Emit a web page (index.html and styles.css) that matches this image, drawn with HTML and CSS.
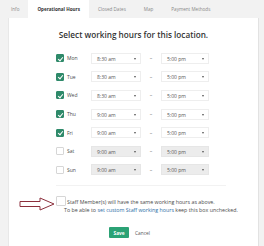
FILE: index.html
```html
<!DOCTYPE html>
<html lang="en">
<head>
  <meta charset="UTF-8">
  <title>Operational Hours</title>
  <link rel="stylesheet" href="styles.css">
</head>
<body>
  <div class="tabs">
    <div class="tab">Info</div>
    <div class="tab active">Operational Hours</div>
    <div class="tab">Closed Dates</div>
    <div class="tab">Map</div>
    <div class="tab">Payment Methods</div>
  </div>

  <div class="panel">
    <h2 class="title">Select working hours for this location.</h2>

    <div class="hours">
      <div class="row">
        <span class="check on"></span><span class="day">Mon</span>
        <div class="select">8:30 am<span class="caret"></span></div>
        <span class="dash">–</span>
        <div class="select to">5:00 pm<span class="caret"></span></div>
      </div>
      <div class="row">
        <span class="check on"></span><span class="day">Tue</span>
        <div class="select">8:30 am<span class="caret"></span></div>
        <span class="dash">–</span>
        <div class="select to">5:00 pm<span class="caret"></span></div>
      </div>
      <div class="row">
        <span class="check on"></span><span class="day">Wed</span>
        <div class="select">8:30 am<span class="caret"></span></div>
        <span class="dash">–</span>
        <div class="select to">5:00 pm<span class="caret"></span></div>
      </div>
      <div class="row">
        <span class="check on"></span><span class="day">Thu</span>
        <div class="select">9:00 am<span class="caret"></span></div>
        <span class="dash">–</span>
        <div class="select to">5:00 pm<span class="caret"></span></div>
      </div>
      <div class="row">
        <span class="check on"></span><span class="day">Fri</span>
        <div class="select">9:00 am<span class="caret"></span></div>
        <span class="dash">–</span>
        <div class="select to">5:00 pm<span class="caret"></span></div>
      </div>
      <div class="row">
        <span class="check"></span><span class="day">Sat</span>
        <div class="select off">9:00 am<span class="caret"></span></div>
        <span class="dash">–</span>
        <div class="select to off">5:00 pm<span class="caret"></span></div>
      </div>
      <div class="row">
        <span class="check"></span><span class="day">Sun</span>
        <div class="select off">9:00 am<span class="caret"></span></div>
        <span class="dash">–</span>
        <div class="select to off">5:00 pm<span class="caret"></span></div>
      </div>
    </div>

    <div class="staff">
      <svg class="pointer" width="36" height="14" viewBox="0 0 36 14">
        <path d="M1 4.5 H21 V1 L35 7 L21 13 V9.5 H1 Z" fill="none" stroke="#8c2f3c" stroke-width="1"/>
      </svg>
      <span class="check"></span>
      <div class="staff-text">
        <div>Staff Member(s) will have the same working hours as above.</div>
        <div class="note">To be able to <a href="#">set custom Staff working hours</a> keep this box unchecked.</div>
      </div>
    </div>

    <div class="actions">
      <button class="save">Save</button>
      <span class="cancel">Cancel</span>
    </div>
  </div>
</body>
</html>
```

FILE: styles.css
```css
body {
  margin: 0;
  background: #f2f2f2;
  font-family: "Open Sans", "Liberation Sans", sans-serif;
  color: #555;
  height: 246px;
  overflow: hidden;
}

.tabs {
  display: flex;
  height: 18px;
  padding-left: 2px;
}

.tab {
  padding: 0 9px;
  font-size: 4.6px;
  line-height: 18px;
  color: #888;
}

.tab.active {
  background: #fff;
  color: #333;
  font-weight: bold;
}

.panel {
  background: #fff;
  margin: 0 5px 0 8px;
  height: 228px;
  border-left: 1px solid #e8e8e8;
  border-right: 1px solid #e2e2e2;
  box-sizing: border-box;
}

.title {
  margin: 0;
  padding-top: 12px;
  font-size: 8.2px;
  font-weight: 600;
  line-height: 10px;
  text-align: center;
  color: #333;
}

.hours {
  margin: 9px 0 0 47px;
  padding-bottom: 6px;
  border-bottom: 1px solid #f2f2f2;
  width: 170px;
}

.row {
  display: flex;
  align-items: center;
  height: 18.6px;
  font-size: 5px;
}

.check {
  width: 8px;
  height: 8px;
  border: 1px solid #d6d6d6;
  border-radius: 1px;
  box-sizing: border-box;
  background: #fff;
  flex: none;
  position: relative;
}

.check.on {
  background: #2f8a6a;
  border-color: #2f8a6a;
}

.check.on::after {
  content: "";
  position: absolute;
  left: 2px;
  top: 0.5px;
  width: 2px;
  height: 4px;
  border: solid #fff;
  border-width: 0 1px 1px 0;
  transform: rotate(40deg);
}

.day {
  width: 24px;
  margin-left: 3px;
  color: #4a4a4a;
}

.select {
  position: relative;
  width: 50px;
  height: 11px;
  line-height: 11px;
  padding-left: 5px;
  box-sizing: border-box;
  border: 1px solid #eee;
  background: #fff;
  color: #555;
}

.select.to {
  width: 48px;
}

.select.off {
  background: #ececec;
  border-color: #e6e6e6;
}

.caret {
  position: absolute;
  right: 4px;
  top: 4px;
  border-left: 1px solid transparent;
  border-right: 1px solid transparent;
  border-top: 2px solid #555;
}

.dash {
  width: 20px;
  text-align: center;
  color: #666;
}

.staff {
  display: flex;
  align-items: flex-start;
  margin: 12px 0 0 10px;
  font-size: 5.3px;
  line-height: 8px;
  color: #4a4a4a;
}

.pointer {
  margin-top: -1px;
  margin-right: 1px;
}

.staff .check {
  width: 10px;
  height: 10px;
  margin-top: -2px;
}

.staff-text {
  margin-left: 1px;
}

.note {
  margin-left: -3px;
}

.note a {
  color: #2a6ea6;
  text-decoration: none;
}

.actions {
  display: flex;
  align-items: center;
  justify-content: center;
  gap: 6px;
  margin-top: 13px;
  padding-right: 8px;
}

.save {
  background: #2ba275;
  color: #fff;
  border: none;
  border-radius: 1px;
  font-family: inherit;
  font-size: 4.8px;
  font-weight: bold;
  width: 20px;
  height: 11px;
  padding: 0;
}

.cancel {
  font-size: 4.8px;
  color: #555;
}
```
